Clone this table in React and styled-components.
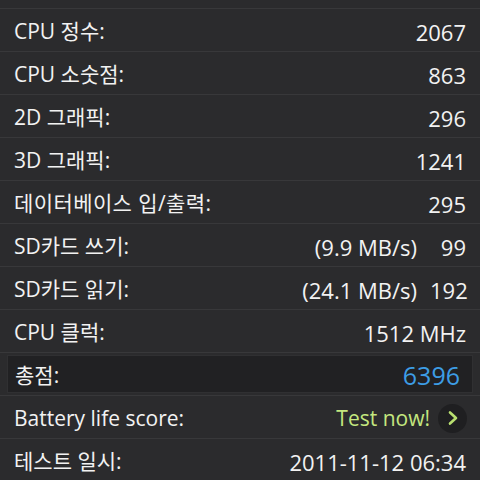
import React from 'react';
import styled, { createGlobalStyle } from 'styled-components';

const GlobalStyle = createGlobalStyle`
  html, body {
    margin: 0;
    padding: 0;
    background: #2b2b2d;
  }
  body {
    font-family: "Open Sans", "Noto Sans CJK KR", sans-serif;
    color: #f2f2f2;
  }
`;

const Screen = styled.div`
  width: 480px;
  height: 480px;
  overflow: hidden;
  background: #2b2b2d;
  padding-top: 8px;
  box-sizing: border-box;
`;

const List = styled.div`
  border-top: 1px solid #38383a;
`;

const Row = styled.div`
  height: 43px;
  display: flex;
  align-items: center;
  justify-content: space-between;
  padding: 3px 14px 0 14px;
  box-sizing: border-box;
  border-bottom: 1px solid #38383a;
  line-height: 1;
`;

const TotalWrap = styled.div`
  height: 43px;
  padding: 2px 7px;
  box-sizing: border-box;
  border-bottom: 1px solid #38383a;
`;

const TotalBox = styled.div`
  height: 100%;
  display: flex;
  align-items: center;
  justify-content: space-between;
  padding: 3px 12px 0 7px;
  box-sizing: border-box;
  background: #212123;
  border: 1px solid #303032;
  line-height: 1;
`;

const Label = styled.span`
  font-size: 21px;
  letter-spacing: ${({ wide }) => (wide ? '0.4px' : '0')};
`;

const Value = styled.span`
  display: flex;
  align-items: center;
  gap: ${({ gap }) => gap || 0}px;
  color: ${({ color }) => color || '#f2f2f2'};
  font-size: ${({ size }) => size || 22}px;
`;

const Speed = styled.span`
  color: #f2f2f2;
`;

const Score = styled.span`
  width: 36px;
  text-align: right;
`;

const Chevron = styled.span`
  width: 29px;
  height: 29px;
  border-radius: 50%;
  background: #1f1f21;
  display: flex;
  align-items: center;
  justify-content: center;
  margin-right: -1px;
  margin-top: -1px;
`;

const rows = [
  { label: 'CPU 정수:', value: '2067' },
  { label: 'CPU 소숫점:', value: '863' },
  { label: '2D 그래픽:', value: '296' },
  { label: '3D 그래픽:', value: '1241' },
  { label: '데이터베이스 입/출력:', value: '295', wide: true },
  { label: 'SD카드 쓰기:', speed: '(9.9 MB/s)', value: '99' },
  { label: 'SD카드 읽기:', speed: '(24.1 MB/s)', value: '192' },
  { label: 'CPU 클럭:', value: '1512 MHz' },
];

export default function App() {
  return (
    <Screen>
      <GlobalStyle />
      <List>
        {rows.map((r) => (
          <Row key={r.label}>
            <Label wide={r.wide}>{r.label}</Label>
            {r.speed ? (
              <Value gap={13}>
                <Speed>{r.speed}</Speed>
                <Score>{r.value}</Score>
              </Value>
            ) : (
              <Value>{r.value}</Value>
            )}
          </Row>
        ))}
        <TotalWrap>
          <TotalBox>
            <Label>총점:</Label>
            <Value color="#3d9de6" size={25}>6396</Value>
          </TotalBox>
        </TotalWrap>
        <Row>
          <Label>Battery life score:</Label>
          <Value color="#c4e77f" gap={8} size={21}>
            Test now!
            <Chevron>
              <svg width="14" height="16" viewBox="0 0 14 16">
                <path d="M4 2.5 L10 8 L4 13.5" fill="none" stroke="#b9e070" strokeWidth="2.6" strokeLinecap="round" strokeLinejoin="round" />
              </svg>
            </Chevron>
          </Value>
        </Row>
        <Row>
          <Label>테스트 일시:</Label>
          <Value>2011-11-12 06:34</Value>
        </Row>
      </List>
    </Screen>
  );
}
